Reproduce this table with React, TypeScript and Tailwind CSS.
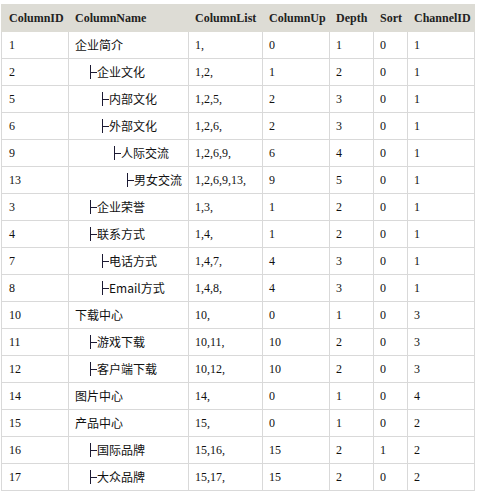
import React from "react"

interface ColumnRow {
  id: number
  name: string
  list: string
  up: number
  depth: number
  sort: number
  channel: number
}

const rows: ColumnRow[] = [
  { id: 1, name: "企业简介", list: "1,", up: 0, depth: 1, sort: 0, channel: 1 },
  { id: 2, name: "企业文化", list: "1,2,", up: 1, depth: 2, sort: 0, channel: 1 },
  { id: 5, name: "内部文化", list: "1,2,5,", up: 2, depth: 3, sort: 0, channel: 1 },
  { id: 6, name: "外部文化", list: "1,2,6,", up: 2, depth: 3, sort: 0, channel: 1 },
  { id: 9, name: "人际交流", list: "1,2,6,9,", up: 6, depth: 4, sort: 0, channel: 1 },
  { id: 13, name: "男女交流", list: "1,2,6,9,13,", up: 9, depth: 5, sort: 0, channel: 1 },
  { id: 3, name: "企业荣誉", list: "1,3,", up: 1, depth: 2, sort: 0, channel: 1 },
  { id: 4, name: "联系方式", list: "1,4,", up: 1, depth: 2, sort: 0, channel: 1 },
  { id: 7, name: "电话方式", list: "1,4,7,", up: 4, depth: 3, sort: 0, channel: 1 },
  { id: 8, name: "Email方式", list: "1,4,8,", up: 4, depth: 3, sort: 0, channel: 1 },
  { id: 10, name: "下载中心", list: "10,", up: 0, depth: 1, sort: 0, channel: 3 },
  { id: 11, name: "游戏下载", list: "10,11,", up: 10, depth: 2, sort: 0, channel: 3 },
  { id: 12, name: "客户端下载", list: "10,12,", up: 10, depth: 2, sort: 0, channel: 3 },
  { id: 14, name: "图片中心", list: "14,", up: 0, depth: 1, sort: 0, channel: 4 },
  { id: 15, name: "产品中心", list: "15,", up: 0, depth: 1, sort: 0, channel: 2 },
  { id: 16, name: "国际品牌", list: "15,16,", up: 15, depth: 2, sort: 1, channel: 2 },
  { id: 17, name: "大众品牌", list: "15,17,", up: 15, depth: 2, sort: 0, channel: 2 },
]

// 深さごとのインデント
const indents: Record<number, string> = {
  2: "ml-[9px]",
  3: "ml-[21px]",
  4: "ml-[33px]",
  5: "ml-[46px]",
}

function Branch({ depth }: { depth: number }) {
  return (
    <span className={`relative inline-block w-[13px] h-[14px] align-[-2px] ${indents[depth]}`}>
      <span className="absolute left-[6px] top-0 w-px h-[14px] bg-[#1c1a33]"></span>
      <span className="absolute left-[6px] top-[7px] w-[7px] h-px bg-[#1c1a33]"></span>
    </span>
  )
}

const th = "h-[27px] px-[6px] text-left font-bold text-[12px] text-[#222] border border-[#dddcd5] bg-[#dddcd5]"
const td = "h-[27px] px-[6px] text-[12px] text-[#111] border border-[#d9d9d9] whitespace-nowrap"

export default function App() {
  return (
    <div className="w-[477px] h-[492px] bg-white pt-[4px] pl-[1px] overflow-hidden font-['Liberation_Serif','Noto_Sans_CJK_SC',serif]">
      <table className="border-collapse table-fixed w-[473px]">
        <colgroup>
          <col className="w-[67px]" />
          <col className="w-[120px]" />
          <col className="w-[74px]" />
          <col className="w-[67px]" />
          <col className="w-[44px]" />
          <col className="w-[34px]" />
          <col className="w-[67px]" />
        </colgroup>
        <thead>
          <tr>
            <th className={`${th} pl-[7px]`}>ColumnID</th>
            <th className={th}>ColumnName</th>
            <th className={th}>ColumnList</th>
            <th className={th}>ColumnUp</th>
            <th className={th}>Depth</th>
            <th className={th}>Sort</th>
            <th className={th}>ChannelID</th>
          </tr>
        </thead>
        <tbody>
          {rows.map((r) => (
            <tr key={r.id}>
              <td className={`${td} pl-[7px]`}>{r.id}</td>
              <td className={`${td} font-['Noto_Sans_CJK_SC',sans-serif]`}>
                {r.depth > 1 && <Branch depth={r.depth} />}
                {r.name}
              </td>
              <td className={td}>{r.list}</td>
              <td className={td}>{r.up}</td>
              <td className={td}>{r.depth}</td>
              <td className={td}>{r.sort}</td>
              <td className={td}>{r.channel}</td>
            </tr>
          ))}
        </tbody>
      </table>
    </div>
  )
}
